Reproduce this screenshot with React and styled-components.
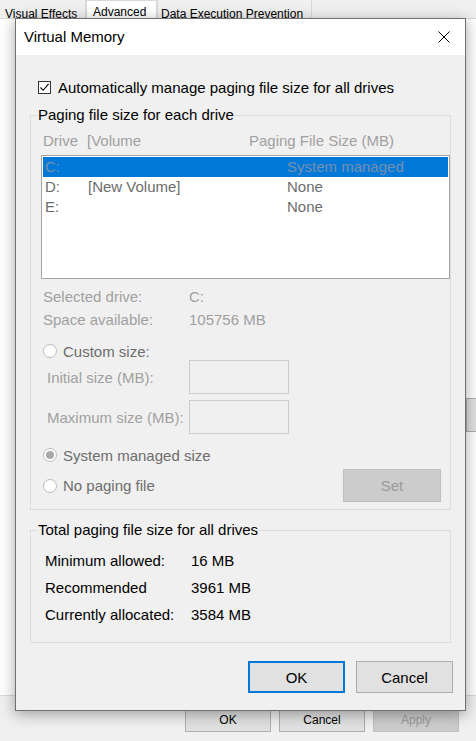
import styled, { createGlobalStyle } from "styled-components";

const GlobalStyle = createGlobalStyle`
  html, body {
    margin: 0;
    padding: 0;
    background: #f0f0f0;
  }
  body {
    font-family: "Liberation Sans", Arial, sans-serif;
  }
`;

// parent window (System Properties) behind the dialog
const Screen = styled.div`
  position: relative;
  width: 476px;
  height: 741px;
  overflow: hidden;
  background: #f0f0f0;
  display: flex;
  flex-direction: column;
`;

const TabStrip = styled.div`
  height: 18px;
  display: flex;
  align-items: flex-start;
  margin-left: -3px;
  position: relative;
  z-index: 1;
`;

const Tab = styled.div`
  box-sizing: border-box;
  width: ${(p) => p.$w}px;
  padding-left: ${(p) => p.$pl}px;
  font-size: 12px;
  line-height: 14px;
  color: #000;
  border: 1px solid #d9d9d9;
  border-bottom: none;
  white-space: nowrap;
  background: ${(p) => (p.$active ? "#ffffff" : "#f0f0f0")};
  height: ${(p) => (p.$active ? 19 : 24)}px;
  margin-top: ${(p) => (p.$active ? 0 : -6)}px;
  padding-top: ${(p) => (p.$active ? 4 : 12)}px;
`;

const TabPage = styled.div`
  flex: 1;
  background: #ffffff;
  border-top: 1px solid #d9d9d9;
  border-bottom: 1px solid #d9d9d9;
  display: flex;
  justify-content: flex-end;
  align-items: flex-start;
`;

const PeekButton = styled.div`
  width: 80px;
  height: 34px;
  margin-top: 379px;
  margin-right: -70px;
  box-sizing: border-box;
  background: #e1e1e1;
  border: 1px solid #adadad;
`;

const Footer = styled.div`
  height: 45px;
  box-sizing: border-box;
  display: flex;
  justify-content: flex-end;
  gap: 8px;
  padding: 12px 17px 0 0;
`;

const ParentButton = styled.div`
  width: 86px;
  height: 24px;
  box-sizing: border-box;
  display: flex;
  align-items: center;
  justify-content: center;
  font-size: 12px;
  background: ${(p) => (p.$disabled ? "#cccccc" : "#e1e1e1")};
  border: 1px solid ${(p) => (p.$disabled ? "#bfbfbf" : "#adadad")};
  color: ${(p) => (p.$disabled ? "#9a9a9a" : "#000")};
`;

// the Virtual Memory dialog
const Dialog = styled.div`
  position: absolute;
  left: 15px;
  top: 18px;
  width: 451px;
  height: 693px;
  box-sizing: border-box;
  border: 1px solid #707070;
  background: #f0f0f0;
  box-shadow: 0 3px 14px rgba(0, 0, 0, 0.35);
  display: flex;
  flex-direction: column;
  font-size: 15px;
  color: #000;
  z-index: 2;
`;

const TitleBar = styled.div`
  height: 36px;
  background: #ffffff;
  display: flex;
  align-items: center;
  justify-content: space-between;
  padding: 0 15px 0 8px;
  flex-shrink: 0;
`;

const Title = styled.span`
  line-height: 18px;
`;

const Body = styled.div`
  flex: 1;
  display: flex;
  flex-direction: column;
  padding: 0 14px 16px 14px;
`;

const CheckRow = styled.label`
  display: flex;
  align-items: center;
  gap: 7px;
  height: 18px;
  margin: 23px 0 0 8px;
`;

const CheckBox = styled.span`
  width: 13px;
  height: 13px;
  box-sizing: border-box;
  border: 1px solid #333333;
  background: #ffffff;
  display: flex;
  align-items: center;
  justify-content: center;
`;

const Group = styled.fieldset`
  margin: ${(p) => p.$mt}px 0 0 0;
  padding: 0 0 ${(p) => p.$pb}px 0;
  border: 1px solid #dcdcdc;
  min-width: 0;
  display: flex;
  flex-direction: column;
`;

const Legend = styled.legend`
  margin-left: 6px;
  padding: 0 1px;
  line-height: 18px;
  color: #000;
`;

const ListHeader = styled.div`
  display: grid;
  grid-template-columns: 44px 162px auto;
  margin-top: 8px;
  padding-left: 12px;
  line-height: 18px;
  color: #a0a0a0;
`;

const ListBox = styled.div`
  margin: 5px 0 0 10px;
  height: 124px;
  box-sizing: border-box;
  border: 1px solid #a5a5a5;
  background: #ffffff;
  padding: 1px;
`;

const ListRow = styled.div`
  display: grid;
  grid-template-columns: 43px 199px auto;
  height: 20px;
  line-height: 20px;
  padding-left: 2px;
  background: ${(p) => (p.$selected ? "#0078d7" : "transparent")};
  color: ${(p) => (p.$selected ? "#7890b0" : "#6d6d6d")};
`;

const InfoRow = styled.div`
  display: grid;
  grid-template-columns: 146px auto;
  height: 23px;
  line-height: 23px;
  padding-left: 12px;
  color: #a0a0a0;
  margin-top: ${(p) => p.$mt || 0}px;
`;

const RadioRow = styled.div`
  display: flex;
  align-items: center;
  gap: 6px;
  height: 18px;
  padding-left: 12px;
  color: #6d6d6d;
  margin-top: ${(p) => p.$mt || 0}px;
`;

const Radio = styled.span`
  width: 14px;
  height: 14px;
  box-sizing: border-box;
  border-radius: 50%;
  border: 1px solid #bcbcbc;
  background: #ffffff;
  display: flex;
  align-items: center;
  justify-content: center;

  &::after {
    content: "";
    width: 8px;
    height: 8px;
    border-radius: 50%;
    background: ${(p) => (p.$checked ? "#a8a8a8" : "transparent")};
  }
`;

const SizeRow = styled.div`
  display: flex;
  align-items: center;
  height: 34px;
  padding-left: 16px;
  color: #a0a0a0;
  margin-top: ${(p) => p.$mt || 0}px;
`;

const SizeLabel = styled.span`
  width: 142px;
`;

const SizeBox = styled.div`
  width: 100px;
  height: 34px;
  box-sizing: border-box;
  border: 1px solid #cccccc;
  background: #f0f0f0;
`;

const LastRow = styled.div`
  display: flex;
  align-items: center;
  justify-content: space-between;
  height: 33px;
  margin-top: 5px;
  padding-right: 9px;
`;

const SetButton = styled.div`
  width: 98px;
  height: 33px;
  box-sizing: border-box;
  background: #cccccc;
  border: 1px solid #bfbfbf;
  color: #9a9a9a;
  display: flex;
  align-items: center;
  justify-content: center;
`;

const TotalRow = styled.div`
  display: grid;
  grid-template-columns: 146px auto;
  height: 27px;
  line-height: 27px;
  padding-left: 14px;
  margin-top: ${(p) => p.$mt || 0}px;
`;

const ButtonRow = styled.div`
  display: flex;
  justify-content: flex-end;
  gap: 11px;
  margin: 18px -2px 0 0;
`;

const DialogButton = styled.div`
  width: 97px;
  height: 32px;
  box-sizing: border-box;
  background: #e1e1e1;
  border: ${(p) => (p.$default ? "2px solid #0078d7" : "1px solid #adadad")};
  display: flex;
  align-items: center;
  justify-content: center;
`;

const drives = [
  { drive: "C:", volume: "", size: "System managed", selected: true },
  { drive: "D:", volume: "[New Volume]", size: "None" },
  { drive: "E:", volume: "", size: "None" },
];

const totals = [
  ["Minimum allowed:", "16 MB"],
  ["Recommended", "3961 MB"],
  ["Currently allocated:", "3584 MB"],
];

export default function App() {
  return (
    <>
      <GlobalStyle />
      <Screen>
        <TabStrip>
          <Tab $w={89} $pl={7}>Visual Effects</Tab>
          <Tab $w={71} $pl={6} $active>
            Advanced
          </Tab>
          <Tab $w={155} $pl={3}>Data Execution Prevention</Tab>
        </TabStrip>
        <TabPage>
          <PeekButton />
        </TabPage>
        <Footer>
          <ParentButton>OK</ParentButton>
          <ParentButton>Cancel</ParentButton>
          <ParentButton $disabled>Apply</ParentButton>
        </Footer>

        <Dialog>
          <TitleBar>
            <Title>Virtual Memory</Title>
            <svg width="12" height="12" viewBox="0 0 12 12">
              <path d="M0.5 0.5 L11.5 11.5 M11.5 0.5 L0.5 11.5" stroke="#000" strokeWidth="1" />
            </svg>
          </TitleBar>
          <Body>
            <CheckRow>
              <CheckBox>
                <svg width="11" height="11" viewBox="0 0 11 11">
                  <path d="M1.5 5.5 L4.2 8.3 L9.6 1.8" fill="none" stroke="#000" strokeWidth="1.1" />
                </svg>
              </CheckBox>
              Automatically manage paging file size for all drives
            </CheckRow>

            <Group $mt={10} $pb={7}>
              <Legend>Paging file size for each drive</Legend>
              <ListHeader>
                <span>Drive</span>
                <span>[Volume</span>
                <span>Paging File Size (MB)</span>
              </ListHeader>
              <ListBox>
                {drives.map((d) => (
                  <ListRow key={d.drive} $selected={d.selected}>
                    <span>{d.drive}</span>
                    <span>{d.volume}</span>
                    <span>{d.size}</span>
                  </ListRow>
                ))}
              </ListBox>
              <InfoRow $mt={6}>
                <span>Selected drive:</span>
                <span>C:</span>
              </InfoRow>
              <InfoRow>
                <span>Space available:</span>
                <span>105756 MB</span>
              </InfoRow>
              <RadioRow $mt={11}>
                <Radio />
                Custom size:
              </RadioRow>
              <SizeRow>
                <SizeLabel>Initial size (MB):</SizeLabel>
                <SizeBox />
              </SizeRow>
              <SizeRow $mt={6}>
                <SizeLabel>Maximum size (MB):</SizeLabel>
                <SizeBox />
              </SizeRow>
              <RadioRow $mt={12}>
                <Radio $checked />
                System managed size
              </RadioRow>
              <LastRow>
                <RadioRow>
                  <Radio />
                  No paging file
                </RadioRow>
                <SetButton>Set</SetButton>
              </LastRow>
            </Group>

            <Group $mt={11} $pb={14}>
              <Legend>Total paging file size for all drives</Legend>
              {totals.map(([label, value], i) => (
                <TotalRow key={label} $mt={i === 0 ? 8 : 0}>
                  <span>{label}</span>
                  <span>{value}</span>
                </TotalRow>
              ))}
            </Group>

            <ButtonRow>
              <DialogButton $default>OK</DialogButton>
              <DialogButton>Cancel</DialogButton>
            </ButtonRow>
          </Body>
        </Dialog>
      </Screen>
    </>
  );
}
